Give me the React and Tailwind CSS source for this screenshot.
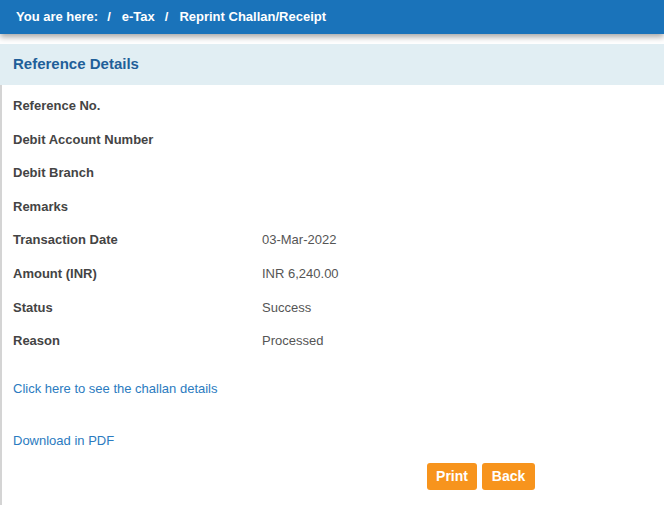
import React from 'react';

const rows = [
  ['Reference No.', ''],
  ['Debit Account Number', ''],
  ['Debit Branch', ''],
  ['Remarks', ''],
  ['Transaction Date', '03-Mar-2022'],
  ['Amount (INR)', 'INR 6,240.00'],
  ['Status', 'Success'],
  ['Reason', 'Processed'],
];

export default function App() {
  return (
    <div className="w-[664px] h-[505px] bg-white overflow-hidden font-['Liberation_Sans',Arial,sans-serif]">
      {/* breadcrumb */}
      <div className="relative z-10 h-[34px] bg-[#1a73ba] shadow-[0_3px_6px_rgba(0,0,0,0.35)] flex items-center pl-4 text-[13px] font-bold text-white">
        <span>You are here:</span>
        <span className="ml-[9px]">/</span>
        <span className="ml-[11px]">e-Tax</span>
        <span className="ml-[10px]">/</span>
        <span className="ml-[11px]">Reprint Challan/Receipt</span>
      </div>

      <div className="mt-[10px] h-[461px] border-l-2 border-[#d4d4d4]">
        <div className="-ml-[2px] h-[41px] bg-[#e1eef3] flex items-center pl-[13px] text-[15px] font-bold text-[#1f5f99]">
          Reference Details
        </div>

        <div className="pl-[11px] pt-[4px]">
          {rows.map(([label, value]) => (
            <div key={label} className="h-[33.6px] flex items-center text-[13px]">
              <span className="w-[249px] font-bold text-[#444]">{label}</span>
              <span className="text-[#555]">{value}</span>
            </div>
          ))}

          <div className="mt-[22px] text-[13px] text-[#2b7bc0] leading-[17px]">Click here to see the challan details</div>
          <div className="mt-[35px] text-[13px] text-[#2b7bc0] leading-[17px]">Download in PDF</div>

          <div className="mt-[14px] flex gap-[5px] pl-[414px]">
            <button className="h-[27px] w-[50px] rounded-[3px] bg-[#f7941d] text-white text-[14px] font-bold">Print</button>
            <button className="h-[27px] w-[53px] rounded-[3px] bg-[#f7941d] text-white text-[14px] font-bold">Back</button>
          </div>
        </div>
      </div>
    </div>
  );
}
